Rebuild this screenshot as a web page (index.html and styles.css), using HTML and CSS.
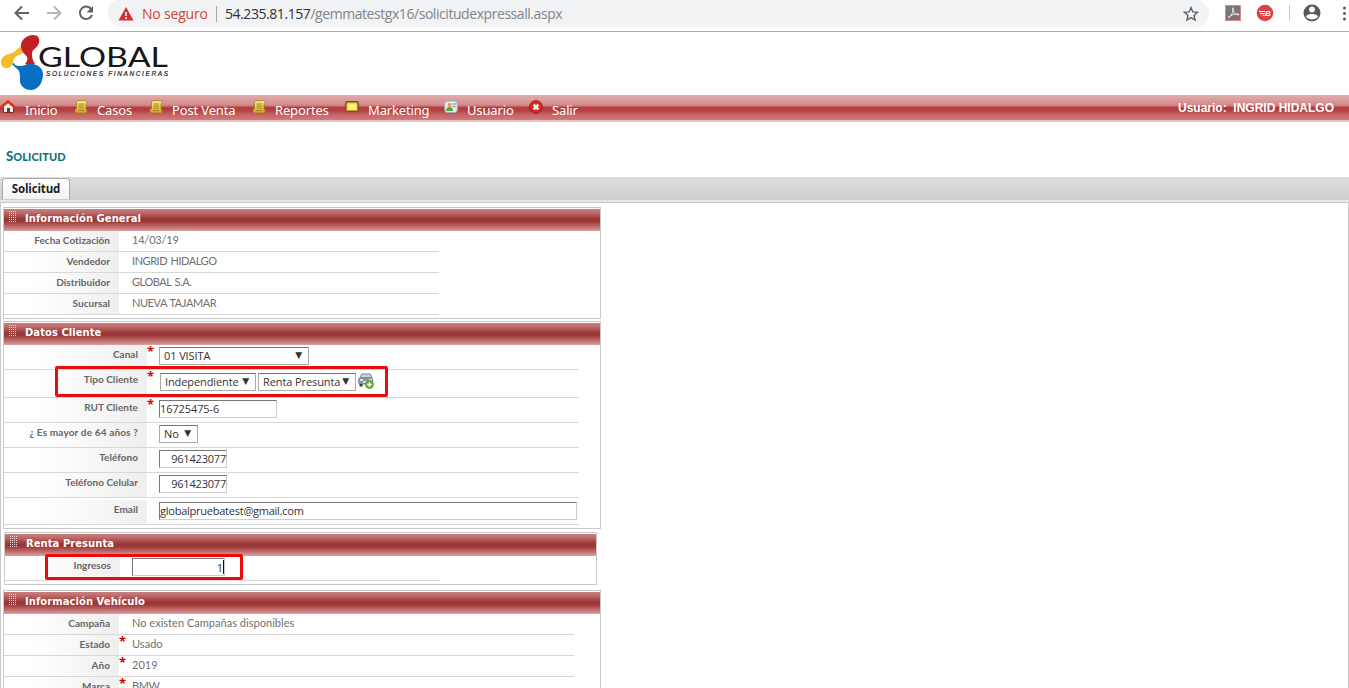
FILE: index.html
```html
<!DOCTYPE html>
<html lang="es">
<head>
<meta charset="utf-8">
<title>Solicitud</title>
<link rel="stylesheet" href="styles.css">
</head>
<body>
<header class="browser">
  <svg class="back" width="108" height="27" viewBox="0 0 108 27" fill="none" stroke="#5f6368" stroke-width="2">
    <path d="M29 13H16M22 6.500L15.500 13L22 19.500"/>
    <path stroke="#b5b7ba" d="M47 13H60M54 6.500L60.500 13L54 19.500"/>
    <path d="M91.200 9.200A6.200 6.200 0 1 0 92 14.800"/><path fill="#5f6368" stroke="none" d="M93 6v6.500h-6.500z"/>
  </svg>
  <div class="urlbar">
    <svg width="16" height="14" viewBox="0 0 16 14"><path fill="#d3302f" d="M8 0L15.500 13.500H.5z"/><path stroke="#fff" stroke-width="1.600" d="M8 5v4M8 10.200v1.700"/></svg>
    <span class="unsafe">No seguro</span>
    <span class="sep"></span>
    <span class="url"><b>54.235.81.157</b>/gemmatestgx16/solicitudexpressall.aspx</span>
    <svg class="star" width="16" height="16" viewBox="0 0 16 16"><path fill="none" stroke="#5f6368" stroke-width="1.400" d="M8 1.500l1.800 4.400 4.800.4-3.600 3.100 1.100 4.700L8 11.600l-4.100 2.500L5 9.400 1.400 6.300l4.800-.4z"/></svg>
  </div>
  <svg width="140" height="27" viewBox="0 0 140 27">
    <rect x="16.500" y="5.500" width="15" height="15" fill="#7d7573" stroke="#d58a86"/>
    <path d="M19 17.500c2-.5 5-4 5.300-8.500 0-2-1-1.500-.6.500.7 3 3 5.500 5.800 5.500 1 0 .5-1.200-1-1.200-3 0-6.500 1.200-9.500 3.700z" fill="none" stroke="#f2eded"/>
    <circle cx="56" cy="13" r="8.300" fill="#dc4347"/>
    <path stroke="#fff" stroke-width="1.200" d="M50 11.500h6M51 13.500h4.500M53.500 15.200h2" />
    <text x="56" y="16.300" class="badge-b">B</text>
    <path stroke="#c4c6c8" d="M80.500 5v16"/>
    <circle cx="103" cy="13" r="8.500" fill="#55595d"/><circle cx="103" cy="9.500" r="2.900" fill="#fff"/><path fill="#fff" d="M97 17c0-4 12-4 12 0-3 3.300-9 3.300-12 0z"/>
    <g fill="#5f6368"><circle cx="135.500" cy="8" r="1.600"/><circle cx="135.500" cy="13.500" r="1.600"/><circle cx="135.500" cy="19" r="1.600"/></g>
  </svg>
</header>

<div class="brand">
  <svg width="172" height="63" viewBox="0 32 172 63">
    <path fill="#f2bd2a" d="M1 63c0-5 3-8 8-9 6-1 8-5 12-8l2 7-4 2c-4 1-6 4-6 8l-1 2c-2 4-10 5-11-2z"/>
    <path fill="#c32026" d="M21 47c-1-7 6-12 12-12 6 0 8 5 5 10-2 4-6 4-6 9 0 4 1 7 3 10l-4 2-6-2c2-2 3-5 2-7-1-3-5-3-6-10z"/>
    <path fill="#0a6fc2" d="M12 64l2-1c1 3 4 3 6 3 4 0 6-2 11-2 6 0 12 4 12 10 0 9-5 16-12 16-8 0-12-6-11-12 0-6-1-8-4-10z"/>
    <text x="38" y="67" textLength="130" lengthAdjust="spacingAndGlyphs" class="logo-name">GLOBAL</text>
    <text x="46" y="76" textLength="122" class="logo-sub">SOLUCIONES FINANCIERAS</text>
  </svg>
</div>

<svg width="0" height="0" class="defs">
  <defs>
    <linearGradient id="gold" x2="0" y2="1"><stop stop-color="#fff08a"/><stop offset="1" stop-color="#d0a01e"/></linearGradient>
    <symbol id="doc" viewBox="0 0 14 14"><path d="M4 .7h7.500q1.500 0 1.500 2l-1 1v6h1v2q0 1.300-1.500 1.300H3Q1 13 1 11V9h1.500V2.500Q2.500 .7 4 .7z" fill="url(#gold)" stroke="#a37d18" stroke-width=".8"/><path stroke="#a37d18" stroke-width=".9" d="M4.500 4h5.500M4.500 6h5.500M4.500 8h5.500M4 10.500h6"/></symbol>
  </defs>
</svg>

<nav class="menu">
  <a class="m1"><svg width="16" height="16" viewBox="0 0 16 16"><path fill="#f5eee6" stroke="#8d2b21" d="M3.500 7v6.500h10V7L8.500 3z"/><path fill="none" stroke="#dc3518" stroke-width="2.600" d="M1.500 8L8 2.500 14.500 8"/><path fill="#5c3b37" d="M7 9h3v5H7z"/></svg><span>Inicio</span></a>
  <a class="m2"><svg width="14" height="14"><use href="#doc"/></svg><span>Casos</span></a>
  <a class="m3"><svg width="14" height="14"><use href="#doc"/></svg><span>Post Venta</span></a>
  <a class="m4"><svg width="14" height="14"><use href="#doc"/></svg><span>Reportes</span></a>
  <a class="m5"><svg width="14" height="14" viewBox="0 0 14 14"><rect x=".7" y="1.700" width="12.600" height="10" rx="1.500" fill="#c9a023" stroke="#72530c" stroke-width="1.200"/><rect x="2.700" y="3.700" width="8.600" height="6" fill="#ffe978" stroke="#fff3a8" stroke-width=".6"/></svg><span>Marketing</span></a>
  <a class="m6"><svg width="14" height="14" viewBox="0 0 14 14"><rect x=".7" y="1" width="12.600" height="11.500" rx="3" fill="#e5eef0" stroke="#9bb0b6"/><circle cx="5.500" cy="5" r="2" fill="#d79c4a"/><path fill="#52a647" d="M2 11q0-4 3.500-4T9 11z"/><path stroke="#718b8c" d="M8.500 4H12M8.500 6.500h3"/></svg><span>Usuario</span></a>
  <a class="m7"><svg width="14" height="14" viewBox="0 0 14 14"><circle cx="7" cy="7" r="6.400" fill="#d92b1d" stroke="#8e1515" stroke-width=".8"/><path stroke="#fff" stroke-width="2.200" d="M4.600 4.600l4.800 4.800M9.400 4.600L4.600 9.400"/></svg><span>Salir</span></a>
  <strong class="user">Usuario:&nbsp; INGRID HIDALGO</strong>
</nav>

<h1 class="title">Solicitud</h1>
<div class="tabs"><div class="tab">Solicitud</div></div>

<main class="content">
  <section class="panel general">
    <h2><i class="grip"></i><span>Información General</span></h2>
    <div class="row"><label>Fecha Cotización</label><span class="value">14/03/19</span></div>
    <div class="row"><label>Vendedor</label><span class="value caps">INGRID HIDALGO</span></div>
    <div class="row"><label>Distribuidor</label><span class="value caps">GLOBAL S.A.</span></div>
    <div class="row"><label>Sucursal</label><span class="value caps">NUEVA TAJAMAR</span></div>
  </section>

  <section class="panel client">
    <h2><i class="grip"></i><span>Datos Cliente</span></h2>
    <div class="row"><label>Canal</label><em>*</em><div class="field select canal"><span>01 VISITA</span><i>▼</i></div></div>
    <div class="row tipo"><label>Tipo Cliente</label><em>*</em>
      <div class="field select indep"><span>Independiente</span><i>▼</i></div>
      <div class="field select renta"><span>Renta Presunta</span><i>▼</i></div>
      <svg class="car" width="16" height="16" viewBox="0 0 16 16"><path fill="#c3d3e0" stroke="#7b8a97" d="M3.500 1h9l1.500 4H2z"/><rect x=".7" y="5" width="14" height="6" rx="1.500" fill="#8f9ba8" stroke="#737d86"/><path stroke="#eef2f5" stroke-width="1.400" d="M2 7h3M11 7h3M5 9h6"/><path fill="#333c45" d="M1.500 11h3v2.500h-3z"/><circle cx="11.500" cy="11.500" r="3.900" fill="#6ab52b" stroke="#3d8a18" stroke-width=".7"/><path stroke="#fff" stroke-width="1.500" d="M9.200 11.500h4.600M11.500 9.200v4.600"/></svg>
      <div class="mark mark-tipo"></div>
    </div>
    <div class="row"><label>RUT Cliente</label><em>*</em><div class="field rut"><span>16725475-6</span></div></div>
    <div class="row"><label class="age">¿ Es mayor de 64 años ?</label><em></em><div class="field select yesno"><span>No</span><i>▼</i></div></div>
    <div class="row"><label>Teléfono</label><em></em><div class="field phone"><span>961423077</span></div></div>
    <div class="row"><label>Teléfono Celular</label><em></em><div class="field phone"><span>961423077</span></div></div>
    <div class="row mail"><label>Email</label><em></em><div class="field email"><span>globalpruebatest@gmail.com</span></div></div>
  </section>

  <section class="panel income">
    <h2><i class="grip"></i><span>Renta Presunta</span></h2>
    <div class="row"><label>Ingresos</label><div class="field amount"><span>1</span></div><div class="mark mark-income"></div></div>
  </section>

  <section class="panel vehicle">
    <h2><i class="grip"></i><span>Información Vehículo</span></h2>
    <div class="row"><label>Campaña</label><em></em><span class="value">No existen Campañas disponibles</span></div>
    <div class="row"><label>Estado</label><em>*</em><span class="value">Usado</span></div>
    <div class="row"><label>Año</label><em>*</em><span class="value">2019</span></div>
    <div class="row"><label>Marca</label><em>*</em><span class="value caps">BMW</span></div>
  </section>
</main>
</body>
</html>
```
FILE: styles.css
```css
* { box-sizing: border-box; }
body { margin: 0; width: 1349px; height: 688px; overflow: hidden; background: #fff; font-family: Lato, sans-serif; color: #666; display: flex; flex-direction: column; }
svg { display: block; flex: none; }
.defs { position: absolute; }
h1, h2 { margin: 0; }
i, em { font-style: normal; }

.browser { height: 32px; flex: none; display: flex; border-bottom: 1px solid #adadad; }
.urlbar { width: 1101px; height: 27px; background: #f1f3f4; border-radius: 10px 14px 14px 14px; padding-left: 10px; display: flex; align-items: center; font: 14px/27px "Open Sans", sans-serif; }
.unsafe { color: #d3453c; margin-left: 8px; width: 65px; white-space: nowrap; letter-spacing: -.2px; }
.sep { width: 1px; height: 16px; background: #a5a8ab; margin: 0 8px 0 9px; }
.url { color: #80868b; white-space: nowrap; flex: 1; letter-spacing: -.44px; }
.url b { color: #303236; font-weight: 400; }
.star { margin-right: 10px; }
.badge-b { font: italic bold 8px "Liberation Sans", sans-serif; fill: #fff; }

.brand { height: 63px; flex: none; }
.logo-name { font: 27px Lato, sans-serif; fill: #161616; }
.logo-sub { font: italic 6.500px "Liberation Sans", sans-serif; fill: #222; stroke: #222; stroke-width: .2px; }

.menu { height: 27px; flex: none; display: flex; position: relative; background: linear-gradient(#e0aeae 0, #d58c8c 35%, #ca6a6c 42%, #b63a3d 45%, #b43f41 57%, #c35f61 70%, #d07c7c 92%, #e9c5c4 93%, #e6bcbc 100%); color: #fff; font: 13px/16px "Noto Sans", sans-serif; }
.menu a { display: flex; flex: none; height: 27px; padding-top: 5px; }
.menu a span { padding-top: 2px; white-space: nowrap; letter-spacing: -.15px; }
.m1 { width: 74px; padding-left: 1px; }
.m1 span { margin-left: 9px; }
.m2 { width: 75px; } .m3 { width: 103px; } .m4 { width: 93px; } .m5 { width: 99px; } .m6 { width: 85px; } .m7 { width: 60px; }
.m1 svg { margin-left: -1px; margin-top: -1px; }
.m2 span, .m3 span, .m4 span, .m5 span, .m6 span, .m7 span { margin-left: 9px; }
.user { font: bold 12px/27px "Liberation Sans", sans-serif; margin-left: auto; margin-right: 15px; white-space: nowrap; }

.title { height: 55px; flex: none; padding: 25px 0 0 6px; color: #127476; font: 900 11px/19px Lato, sans-serif; letter-spacing: .08px; text-transform: uppercase; }
.title::first-letter { font-size: 13px; }
.tabs { height: 25px; flex: none; border-bottom: 2px solid #e6e6e6; background: linear-gradient(#dedede, #cfcfcf); padding: 1px 0 0 2px; }
.tab { width: 68px; height: 21px; background: linear-gradient(#fff, #f3f3f3); border: 1px solid #aaa; border-bottom: 0; border-radius: 4px 4px 0 0; color: #222; font: bold 11.500px/20px "Open Sans", sans-serif; letter-spacing: -.15px; text-align: center; }

.content { flex: 1; min-height: 0; overflow: hidden; border: 1px solid #c8c8c8; border-bottom: 0; padding: 4px 0 0 2px; display: flex; flex-direction: column; }
.panel { flex: none; width: 598px; border: 1px solid #c9c9c9; padding-top: 1px; }
.panel h2 { height: 22px; display: flex; background: linear-gradient(#c98080 0, #c06c6c 15%, #983534 46%, #9d3b3a 58%, #c77776 85%, #dba3a3 100%); color: #fff; font: bold 10px/19px "DejaVu Sans", sans-serif; letter-spacing: .05px; }
.grip { width: 8px; height: 12px; margin: 2px 8px 0 5px; background: radial-gradient(circle at .5px .5px, #edd0d0 .6px, transparent .8px) 0 0 / 2px 2px; }
.row { display: flex; position: relative; height: 21px; border-bottom: 1px solid #d8d8d8; width: 435px; }
.row label { flex: none; width: 115px; padding-right: 9px; text-align: right; background: linear-gradient(to right, #fff 25%, #efefef); font-size: 10px; font-weight: 700; line-height: 19px; white-space: nowrap; letter-spacing: .03px; }
.row .age { letter-spacing: .15px; }
.value { margin-left: 13px; font-size: 11px; line-height: 18px; color: #707070; white-space: nowrap; letter-spacing: .03px; }
.caps { letter-spacing: -.45px; word-spacing: 1px; }
.general .value:not(.caps) { letter-spacing: -.2px; }
.row em { flex: none; width: 12px; color: #d90000; font: bold 13px/12px "Open Sans", sans-serif; }

.general { height: 112px; }
.client { height: 208px; margin-top: 2px; }
.client .row { width: 575px; height: 25px; }
.client .row label { width: 143px; line-height: 18px; }
.client .row.tipo { height: 28px; }
.client .row.mail { height: 27px; }
.client .row.mail label { margin-top: 2px; }
.field { flex: none; height: 18px; margin-top: 2px; border: 1px solid #ccc; border-top-color: #777; border-left-color: #777; background: #fff; color: #333; font: 11px/16px "Open Sans", sans-serif; letter-spacing: -.1px; display: flex; white-space: nowrap; }
.select { border: 1px solid #aaa; border-top-color: #777; padding: 0 6px 0 4px; justify-content: space-between; }
.select i { font: 9px/15px "DejaVu Sans", sans-serif; }
.canal { width: 150px; }
.tipo .field { margin-top: 3px; }
.indep { width: 96px; margin-left: 1px; }
.renta { width: 98px; margin-left: 2px; }
.car { margin: 3px 0 0 2px; }
.rut { width: 118px; }
.yesno { width: 39px; }
.phone { width: 68px; justify-content: flex-end; letter-spacing: -.2px; }
.mail .field { margin-top: 4px; width: 418px; letter-spacing: -.24px; }

.income { width: 593px; height: 53px; margin: 3px 0 0 1px; }
.income .row { height: 25px; }
.income .row label { height: 20px; margin-top: 1px; line-height: 17px; }
.amount { width: 93px; margin-left: 12px; justify-content: flex-end; }
.amount span { border-right: 1px solid #111; height: 14px; margin-top: 1px; line-height: 15px; }
.vehicle { height: 150px; margin-top: 5px; }
.vehicle .row { width: 570px; }
.vehicle .value { margin-left: 1px; }

.mark { position: absolute; border: 3px solid #e70d0d; border-radius: 2px; }
.mark-tipo { left: 51px; top: -4px; width: 333px; height: 31px; }
.mark-income { left: 40px; top: -2px; width: 198px; height: 26px; }
```
